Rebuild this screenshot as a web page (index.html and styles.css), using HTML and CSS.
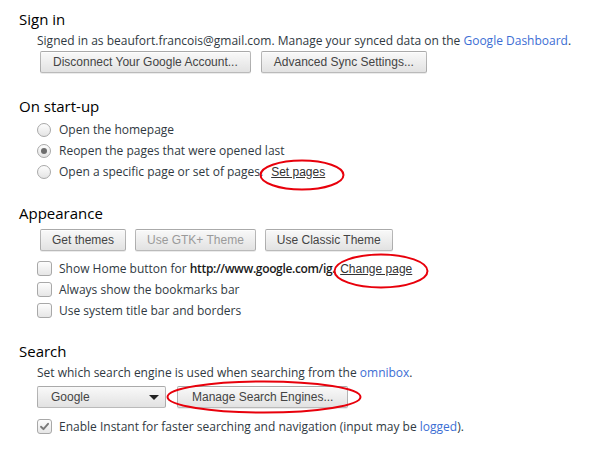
FILE: index.html
```html
<!DOCTYPE html>
<html>
<head>
<meta charset="utf-8">
<link rel="stylesheet" href="styles.css">
</head>
<body>
<div class="page">
  <section class="sec sec-signin">
    <h3 class="sec-title">Sign in</h3>
    <div class="sec-body">
      <div class="desc">Signed in as beaufort.francois@gmail.com. Manage your synced data on the <a class="link" href="#">Google Dashboard</a>.</div>
      <div class="btn-row">
        <button class="btn">Disconnect Your Google Account...</button>
        <button class="btn">Advanced Sync Settings...</button>
      </div>
    </div>
  </section>

  <section class="sec sec-startup">
    <h3 class="sec-title">On start-up</h3>
    <div class="sec-body">
      <label class="row"><span class="radio"></span><span>Open the homepage</span></label>
      <label class="row"><span class="radio checked"></span><span>Reopen the pages that were opened last</span></label>
      <label class="row"><span class="radio"></span><span>Open a specific page or set of pages.</span><span class="annot annot-set"><a class="ulink" href="#">Set pages</a><svg class="ring ring-set" viewBox="0 0 86 32"><ellipse cx="43" cy="16" rx="41.5" ry="14.5" fill="none" stroke="#e8000b" stroke-width="2"/></svg></span></label>
    </div>
  </section>

  <section class="sec sec-appear">
    <h3 class="sec-title">Appearance</h3>
    <div class="sec-body">
      <div class="btn-row btn-row-app">
        <button class="btn">Get themes</button>
        <button class="btn disabled">Use GTK+ Theme</button>
        <button class="btn">Use Classic Theme</button>
      </div>
      <label class="row"><span class="check"></span><span>Show Home button for <b class="url">http://www.google.com/ig.</b></span><span class="annot annot-change"><a class="ulink" href="#">Change page</a><svg class="ring ring-change" viewBox="0 0 96 36"><ellipse cx="48" cy="18" rx="46.5" ry="16.5" fill="none" stroke="#e8000b" stroke-width="2"/></svg></span></label>
      <label class="row"><span class="check"></span><span>Always show the bookmarks bar</span></label>
      <label class="row"><span class="check"></span><span>Use system title bar and borders</span></label>
    </div>
  </section>

  <section class="sec sec-search">
    <h3 class="sec-title">Search</h3>
    <div class="sec-body">
      <div class="desc">Set which search engine is used when searching from the <a class="link" href="#">omnibox</a>.</div>
      <div class="search-row">
        <div class="select"><span>Google</span><span class="caret"></span></div>
        <span class="annot annot-manage"><button class="btn btn-manage">Manage Search Engines...</button><svg class="ring ring-manage" viewBox="0 0 196 34"><ellipse cx="98" cy="17" rx="96.5" ry="15.5" fill="none" stroke="#e8000b" stroke-width="2"/></svg></span>
      </div>
      <label class="row row-instant"><span class="check checked"><svg viewBox="0 0 15 15"><path d="M3.5 7.8 L6.3 10.6 L11.6 4.4" fill="none" stroke="#7a7a7a" stroke-width="2.2" stroke-linecap="round" stroke-linejoin="round"/></svg></span><span>Enable Instant for faster searching and navigation (input may be <a class="link" href="#">logged</a>).</span></label>
    </div>
  </section>
</div>
</body>
</html>
```

FILE: styles.css
```css
* { box-sizing: border-box; }
html, body { margin: 0; padding: 0; background: #fff; }
body {
  font-family: "Open Sans", "DejaVu Sans", sans-serif;
  font-size: 12px;
  color: #303942;
  width: 595px;
  height: 457px;
  overflow: hidden;
}
.page { padding: 9px 0 0 19px; }
.sec { display: flex; flex-direction: column; }
.sec-title {
  margin: 0;
  font-weight: normal;
  font-size: 15px;
  line-height: 20px;
  color: #000;
}
.sec-body { padding-left: 18px; display: flex; flex-direction: column; }
.desc { line-height: 18px; margin-top: 3px; white-space: nowrap; }
.link { color: #3c6ed4; text-decoration: none; }
.btn-row { display: flex; gap: 10px; padding-left: 3px; margin-top: 1px; }
.btn {
  font-family: "Liberation Sans", Arial, sans-serif;
  font-size: 12px;
  color: #444;
  height: 22px;
  padding: 0 12px;
  border: 1px solid rgba(0,0,0,0.25);
  border-radius: 2px;
  background: linear-gradient(#f9f9f9, #e2e2e2);
  box-shadow: 0 1px 0 rgba(0,0,0,0.08), inset 0 1px 1px rgba(255,255,255,0.75);
  white-space: nowrap;
  margin: 0;
}
.btn.disabled { color: #9a9a9a; }
.sec-startup { margin-top: 23px; }
.sec-startup .sec-body { margin-top: 3px; }
.row {
  display: flex;
  align-items: center;
  height: 21px;
  white-space: nowrap;
}
.radio {
  width: 14px; height: 14px;
  border-radius: 50%;
  border: 1px solid #a8a8a8;
  background: linear-gradient(#fdfdfd, #e4e4e4);
  margin-right: 8px;
  flex: none;
  display: flex; align-items: center; justify-content: center;
}
.radio.checked::after {
  content: "";
  width: 6px; height: 6px; border-radius: 50%;
  background: #6d6d6d;
}
.annot { position: relative; display: inline-flex; align-items: center; }
.ulink {
  font-family: "Liberation Sans", Arial, sans-serif;
  font-size: 12px;
  color: #333;
  text-decoration: underline;
  margin-left: 5px;
}
.annot-set .ulink { margin-left: 8px; }
.ring { position: absolute; pointer-events: none; }
.ring-set { width: 86px; height: 32px; left: -4px; top: -6px; }
.ring-change { width: 96px; height: 36px; left: -2px; top: -9px; }
.sec-appear { margin-top: 21px; }
.btn-row-app { margin-top: 6px; gap: 9px; margin-bottom: 7px; }
.btn-row-app .btn { padding: 0 11px; }
.url { font-weight: 600; color: #1a1a1a; letter-spacing: -0.35px; }
.check {
  width: 15px; height: 15px;
  border-radius: 3px;
  border: 1px solid #a8a8a8;
  background: linear-gradient(#fdfdfd, #e6e6e6);
  margin-right: 7px;
  flex: none;
  display: flex;
}
.check svg { width: 13px; height: 13px; }
.sec-search { margin-top: 20px; }
.search-row { display: flex; align-items: center; margin-top: 4px; }
.select {
  width: 129px; height: 22px;
  border: 1px solid rgba(0,0,0,0.25);
  border-radius: 2px;
  background: linear-gradient(#f9f9f9, #e2e2e2);
  display: flex; align-items: center; justify-content: space-between;
  padding: 0 6px 0 13px;
  font-family: "Liberation Sans", Arial, sans-serif;
  font-size: 12px;
  color: #444;
}
.caret {
  width: 0; height: 0;
  border-left: 5px solid transparent;
  border-right: 5px solid transparent;
  border-top: 5px solid #222;
}
.annot-manage { margin-left: 11px; }
.btn-manage { padding: 0 14px; }
.ring-manage { width: 196px; height: 34px; left: -11px; top: -6px; }
.row-instant { margin-top: 8px; }
```
